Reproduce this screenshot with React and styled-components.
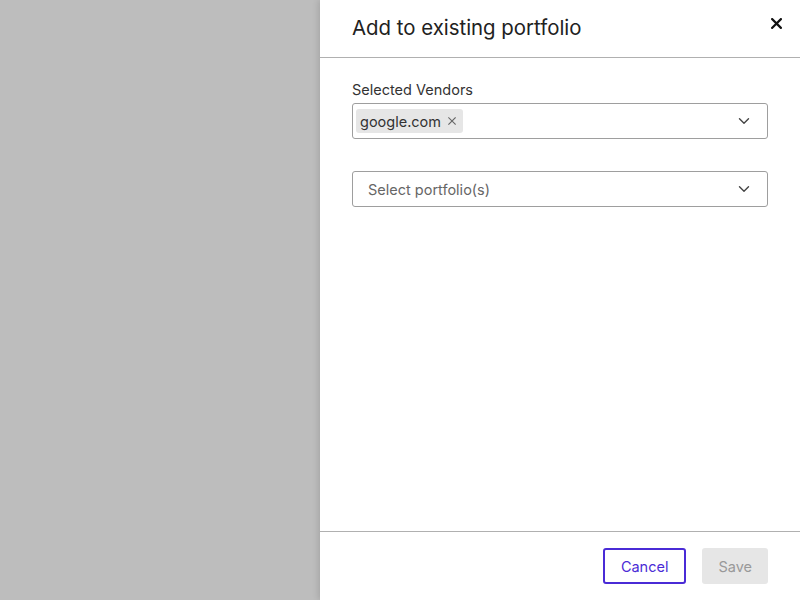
import React from 'react'
import styled, { createGlobalStyle } from 'styled-components'

const Global = createGlobalStyle`
  html, body { margin: 0; padding: 0; }
  body { font-family: Inter, "Noto Sans", sans-serif; color: #212121; }
  * { box-sizing: border-box; }
`

const Screen = styled.div`
  width: 800px;
  height: 600px;
  display: flex;
  background: #bdbdbd;
`

const Backdrop = styled.div`
  flex: 1;
`

const Drawer = styled.aside`
  width: 480px;
  height: 600px;
  background: #fff;
  display: flex;
  flex-direction: column;
  box-shadow: -2px 0 6px rgba(0, 0, 0, 0.12);
`

const Header = styled.header`
  height: 58px;
  border-bottom: 1px solid #b0b0b0;
  display: flex;
  align-items: center;
  justify-content: space-between;
  padding: 0 16px 2px 32px;
`

const Title = styled.h2`
  margin: 0;
  font-size: 20.4px;
  font-weight: 400;
  color: #212121;
`

const CloseBtn = styled.button`
  border: none;
  background: none;
  padding: 0;
  margin-top: -8px;
  width: 16px;
  height: 16px;
  display: flex;
  align-items: center;
  justify-content: center;
  cursor: pointer;
`

const Body = styled.div`
  flex: 1;
  padding: 22px 32px 0;
  display: flex;
  flex-direction: column;
`

const Label = styled.label`
  font-size: 14.5px;
  color: #333;
  line-height: 20px;
  margin-bottom: 3px;
`

const SelectBox = styled.div`
  height: 36px;
  border: 1px solid #9e9e9e;
  border-radius: 3px;
  display: flex;
  align-items: center;
  padding: ${p => (p.$placeholder ? '0 17px 0 15px' : '0 17px 0 3px')};
  margin-bottom: ${p => p.$mb || 0}px;
`

const Values = styled.div`
  flex: 1;
  display: flex;
  align-items: center;
  gap: 4px;
`

const Chip = styled.span`
  display: inline-flex;
  align-items: center;
  height: 24px;
  padding: 0 7px 0 4px;
  background: #e6e6e6;
  border-radius: 3px;
  font-size: 14.5px;
  color: #333;
  gap: 7px;
`

const Placeholder = styled.span`
  font-size: 14.5px;
  color: #666;
`

const Footer = styled.footer`
  height: 69px;
  border-top: 1px solid #b0b0b0;
  display: flex;
  align-items: center;
  justify-content: flex-end;
  gap: 16px;
  padding: 0 32px 0 0;
`

const Button = styled.button`
  height: 36px;
  padding: 0 16px;
  font-family: inherit;
  font-size: 14.5px;
  border-radius: 3px;
  cursor: pointer;
  ${p =>
    p.$outline
      ? `background: #fff; border: 2px solid #4a2bd6; color: #4a2bd6;`
      : `background: #e6e6e6; border: none; color: #999;`}
`

const Chevron = () => (
  <svg width="12" height="8" viewBox="0 0 12 8" fill="none">
    <path d="M1.5 1.8L6 6.2l4.5-4.4" stroke="#444" strokeWidth="1.4" strokeLinecap="round" strokeLinejoin="round" />
  </svg>
)

const Cross = ({ size = 10, stroke = '#111', width = 2 }) => (
  <svg width={size} height={size} viewBox="0 0 10 10" fill="none">
    <path d="M1 1l8 8M9 1L1 9" stroke={stroke} strokeWidth={width} strokeLinecap="square" />
  </svg>
)

export default function App() {
  return (
    <Screen>
      <Global />
      <Backdrop />
      <Drawer>
        <Header>
          <Title>Add to existing portfolio</Title>
          <CloseBtn aria-label="close">
            <Cross size={11} width={2} />
          </CloseBtn>
        </Header>
        <Body>
          <Label>Selected Vendors</Label>
          <SelectBox $mb={32}>
            <Values>
              <Chip>
                google.com
                <Cross size={8} stroke="#666" width={1.4} />
              </Chip>
            </Values>
            <Chevron />
          </SelectBox>
          <SelectBox $placeholder>
            <Values>
              <Placeholder>Select portfolio(s)</Placeholder>
            </Values>
            <Chevron />
          </SelectBox>
        </Body>
        <Footer>
          <Button $outline>Cancel</Button>
          <Button>Save</Button>
        </Footer>
      </Drawer>
    </Screen>
  )
}
